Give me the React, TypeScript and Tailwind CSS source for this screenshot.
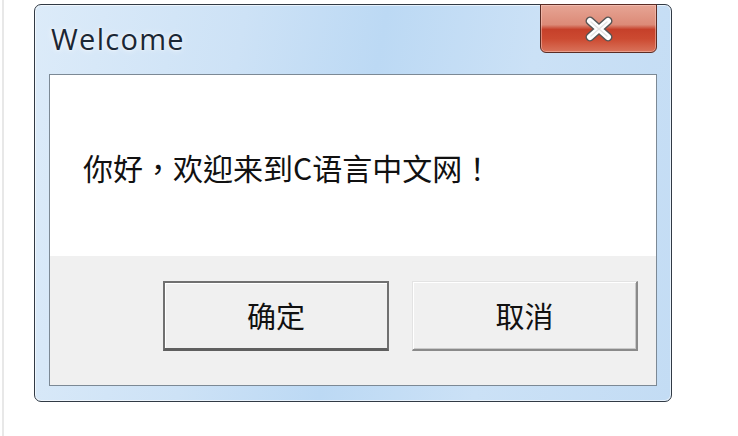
import React from "react";

const cjk = '"Noto Sans CJK SC", "Noto Sans", sans-serif';
const cjkCentered = '"Noto Sans CJK TC", "Noto Sans CJK SC", sans-serif';

function CloseGlyph() {
  return (
    <svg width="34" height="26" viewBox="0 0 34 26">
      <path
        d="M8 5 L26 21 M26 5 L8 21"
        stroke="#555555"
        strokeWidth="9"
        strokeLinecap="round"
        fill="none"
      />
      <path
        d="M8 5 L26 21 M26 5 L8 21"
        stroke="#ffffff"
        strokeWidth="6"
        strokeLinecap="round"
        fill="none"
      />
      <path d="M9 6 L25 20 M25 6 L9 20" stroke="#e4e4e4" strokeWidth="1.5" strokeLinecap="round" fill="none" />
    </svg>
  );
}

export default function App() {
  return (
    <div className="w-[738px] h-[436px] bg-white flex overflow-hidden">
      {/* page gutter line */}
      <div className="ml-[2px] w-[2px] h-full bg-[#e8e8e8]" />

      {/* dialog window */}
      <div className="ml-[30px] mt-[4px] relative w-[638px] h-[398px] rounded-[7px] border border-[#313a45] bg-[linear-gradient(100deg,#dcebf9_0%,#cde2f6_30%,#bcd9f4_50%,#cbe1f6_72%,#c3dcf4_100%)] shadow-[inset_0_0_0_1px_rgba(255,255,255,0.6)] flex flex-col">
        {/* title bar */}
        <div className="h-[69px] flex items-start pl-[16px] pt-[14px]">
          <span
            className="text-[29px] leading-[40px] tracking-[1.3px] text-[#1b2735] [text-shadow:0_0_6px_rgba(255,255,255,0.9),0_0_2px_rgba(255,255,255,0.9)]"
            style={{ fontFamily: '"Open Sans", "Noto Sans", sans-serif' }}
          >
            Welcome
          </span>
        </div>

        {/* close button */}
        <div className="absolute top-[-1px] right-[14px] w-[117px] h-[49px] rounded-b-[6px] border border-[#5b2c24] bg-[linear-gradient(180deg,#e6a595_0%,#dc8a77_42%,#c6402a_52%,#cc4a31_72%,#d9735b_100%)] shadow-[inset_0_0_0_1px_rgba(255,215,205,0.45)] flex items-center justify-center">
          <CloseGlyph />
        </div>

        {/* client area */}
        <div className="mx-[14px] h-[312px] border border-[#7c8995] flex flex-col bg-white">
          <div className="h-[181px] bg-white flex items-center pl-[33px] pt-[2px]">
            <span className="text-[30px] leading-[40px] text-[#111]" style={{ fontFamily: cjkCentered }}>
              你好，欢迎来到C语言中文网！
            </span>
          </div>
          <div className="flex-1 bg-[#f0f0f0] flex items-start justify-end gap-[23px] pt-[25px] pr-[18px]">
            <button
              className="w-[226px] h-[70px] bg-[#f0f0f0] border-2 border-[#707070] border-b-[3px] border-b-[#5f5f5f] shadow-[inset_1px_1px_0_#ffffff] flex items-center justify-center text-[29px] text-[#111]"
              style={{ fontFamily: cjk }}
            >
              确定
            </button>
            <button
              className="w-[226px] h-[70px] bg-[#f0f0f0] border border-t-[#e3e3e3] border-l-[#e3e3e3] border-r-2 border-b-2 border-r-[#8a8a8a] border-b-[#8a8a8a] shadow-[inset_1px_1px_0_#ffffff,inset_-1px_-1px_0_#c9c9c9] flex items-center justify-center text-[29px] text-[#111]"
              style={{ fontFamily: cjk }}
            >
              取消
            </button>
          </div>
        </div>
      </div>
    </div>
  );
}
